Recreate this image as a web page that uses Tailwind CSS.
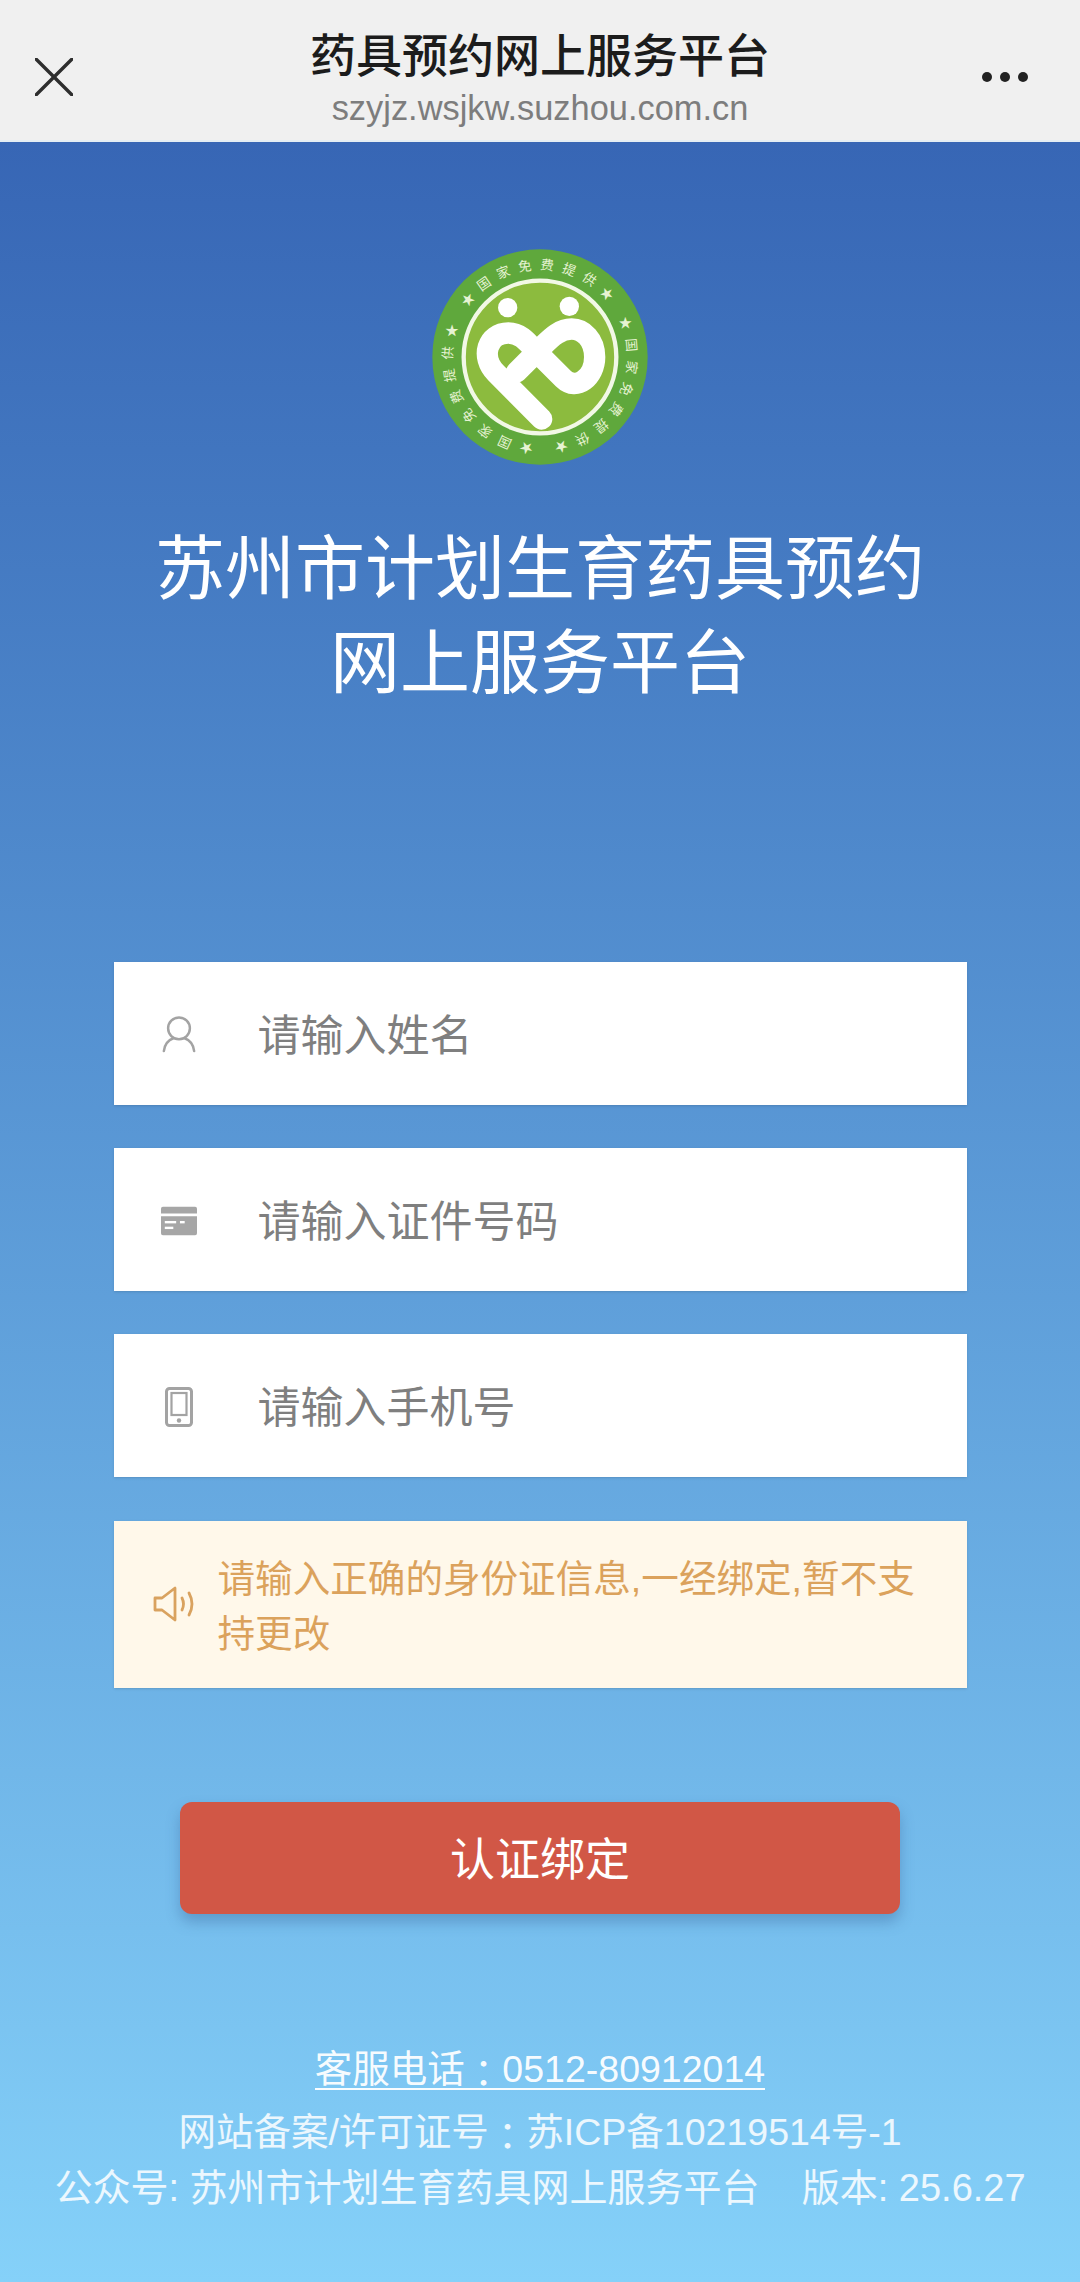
<!DOCTYPE html>
<html lang="zh-CN">
<head>
  <meta charset="UTF-8" />
  <meta name="viewport" content="width=device-width, initial-scale=1.0" />
  <title>药具预约网上服务平台</title>
  <script src="https://cdn.jsdelivr.net/npm/@tailwindcss/browser@4"></script>
</head>
<body class="w-[1080px] h-[2282px] overflow-hidden flex flex-col [font-family:'Liberation_Sans','Noto_Sans_CJK_SC',sans-serif]">

  <!-- 顶部标题栏 -->
  <header class="h-[142px] shrink-0 bg-[#f0f0f0] border-b-2 border-[#e4edf3] flex items-start justify-between px-[35px]">
    <div class="w-[120px]">
      <svg class="w-[38px] h-[38px] mt-[58px]" viewBox="0 0 38 38" fill="none">
        <path d="M1 1 L37 37 M37 1 L1 37" class="stroke-[#2e2e2e]" stroke-width="3.4" stroke-linecap="round" />
      </svg>
    </div>
    <div class="flex flex-col items-center">
      <div class="mt-[26px] text-[46px] leading-[60px] font-medium text-[#1c1c1c]">药具预约网上服务平台</div>
      <div class="text-[34.4px] leading-[44px] text-[#7d7d7d]">szyjz.wsjkw.suzhou.com.cn</div>
    </div>
    <div class="w-[120px] flex justify-end gap-[8px] mt-[72px] pr-[17px]">
      <span class="w-[10px] h-[10px] rounded-full bg-[#222222]"></span>
      <span class="w-[10px] h-[10px] rounded-full bg-[#222222]"></span>
      <span class="w-[10px] h-[10px] rounded-full bg-[#222222]"></span>
    </div>
  </header>

  <main class="flex-1 flex flex-col items-center bg-gradient-to-b from-[#3766b5] to-[#85d1f9]">

    <!-- 徽标 -->
    <svg class="w-[216px] h-[216px] mt-[107px]" viewBox="96 56 648 648">
      <defs>
        <path id="ringArc" d="M 158 380 A 262 262 0 0 1 682 380" />
      </defs>
      <circle cx="420" cy="380" r="323" class="fill-[#5fa83c]" />
      <circle cx="420" cy="380" r="229" class="fill-[#8cbb3e] stroke-[#f2f8e6]" stroke-width="13" />
      <circle cx="323" cy="232" r="29" class="fill-white" />
      <circle cx="508" cy="228" r="29" class="fill-white" />
      <path d="M425 566 L288 428 C240 380 262 308 325 308 C358 308 378 330 400 355 L490 445 C530 484 584 440 584 380 C584 328 550 296 515 296 C480 296 455 320 430 345 L350 425" fill="none" class="stroke-white" stroke-width="64" stroke-linecap="round" stroke-linejoin="round" />
      <g class="fill-[#e6f3d2] text-[40px]">
        <text text-anchor="middle" letter-spacing="24"><textPath href="#ringArc" startOffset="50%">★国家免费提供★</textPath></text>
        <text text-anchor="middle" letter-spacing="24" transform="rotate(120 420 380)"><textPath href="#ringArc" startOffset="50%">★国家免费提供★</textPath></text>
        <text text-anchor="middle" letter-spacing="24" transform="rotate(240 420 380)"><textPath href="#ringArc" startOffset="50%">★国家免费提供★</textPath></text>
      </g>
    </svg>

    <h1 class="mt-[58px] text-[70px] leading-[94px] text-white text-center">苏州市计划生育药具预约<br />网上服务平台</h1>

    <!-- 表单 -->
    <div class="mt-[251px] w-[853px] flex flex-col gap-[43px]">
      <div class="h-[143px] bg-white flex items-center pl-[47px] shadow-sm">
        <svg class="w-[36px] h-[38px] mr-[61px]" viewBox="0 0 38 38" fill="none">
          <circle cx="19" cy="13" r="11.5" class="stroke-[#a3a3a3]" stroke-width="2.6" />
          <path d="M3 37 C4 29 9 25 13 23.5 M35 37 C34 29 29 25 25 23.5" class="stroke-[#a3a3a3]" stroke-width="2.6" stroke-linecap="round" />
        </svg>
        <span class="text-[43px] pt-[6px] text-[#7f7f7f]">请输入姓名</span>
      </div>
      <div class="h-[143px] bg-white flex items-center pl-[47px] shadow-sm">
        <svg class="w-[36px] h-[30px] mt-[2px] mr-[61px]" viewBox="0 0 38 30">
          <path d="M2 0 H36 Q38 0 38 2 V7 H0 V2 Q0 0 2 0 Z M0 10 H38 V28 Q38 30 36 30 H2 Q0 30 0 28 Z" class="fill-[#a6a6a6]" />
          <rect x="4" y="15" width="12" height="2.5" class="fill-white" />
          <rect x="20" y="15" width="5" height="2.5" class="fill-white" />
          <rect x="4" y="21" width="9" height="2.5" class="fill-white" />
        </svg>
        <span class="text-[43px] pt-[6px] text-[#7f7f7f]">请输入证件号码</span>
      </div>
      <div class="h-[143px] bg-white flex items-center pl-[47px] shadow-sm">
        <svg class="w-[36px] h-[40px] mt-[2px] mr-[61px]" viewBox="0 0 36 40" fill="none">
          <rect x="5.5" y="1.5" width="25" height="37" rx="3" class="stroke-[#a3a3a3]" stroke-width="3" />
          <rect x="10.5" y="6" width="15" height="22" class="stroke-[#a3a3a3]" stroke-width="2.2" />
          <circle cx="18" cy="33.5" r="2.2" class="fill-[#a3a3a3]" />
        </svg>
        <span class="text-[43px] pt-[6px] text-[#7f7f7f]">请输入手机号</span>
      </div>
    </div>

    <!-- 提示 -->
    <div class="mt-[44px] w-[853px] h-[167px] bg-[#fff8ea] flex items-center pl-[38px] pr-[40px] shadow-sm">
      <svg class="w-[46px] h-[36px] shrink-0 mr-[20px] -mt-[2px]" viewBox="0 0 44 36" fill="none">
        <path d="M2 12 H9 L22 2 V34 L9 24 H2 Z" class="stroke-[#d9a25f]" stroke-width="2.8" stroke-linejoin="round" />
        <path d="M29 12 Q32 18 29 24 M36 7 Q42 18 36 29" class="stroke-[#d9a25f]" stroke-width="2.8" stroke-linecap="round" />
      </svg>
      <p class="text-[37.6px] leading-[55px] pt-[4px] text-[#dba25c]">请输入正确的身份证信息,一经绑定,暂不支持更改</p>
    </div>

    <button class="mt-[114px] w-[720px] h-[112px] pt-[6px] rounded-[12px] bg-[#d15746] text-white text-[45px] shadow-[0_8px_14px_rgba(50,90,140,0.35)]">认证绑定</button>

    <!-- 底部信息 -->
    <footer class="mt-[133px] flex flex-col items-center text-white/85">
      <a href="#" class="mb-[9px] text-[37.5px] leading-[38px] text-white/95 border-b-2 border-white/95">客服电话<span lang="zh-TW" class="inline-block translate-y-[5px] [font-family:'Noto_Sans_CJK_TC']">：</span>0512-80912014</a>
      <div class="text-[37.5px] leading-[60px]">网站备案/许可证号<span lang="zh-TW" class="inline-block translate-y-[5px] [font-family:'Noto_Sans_CJK_TC']">：</span>苏ICP备10219514号-1</div>
      <div class="mt-[2px] text-[38px] leading-[48px] whitespace-pre">公众号: 苏州市计划生育药具网上服务平台    版本: 25.6.27</div>
    </footer>
  </main>

</body>
</html>
